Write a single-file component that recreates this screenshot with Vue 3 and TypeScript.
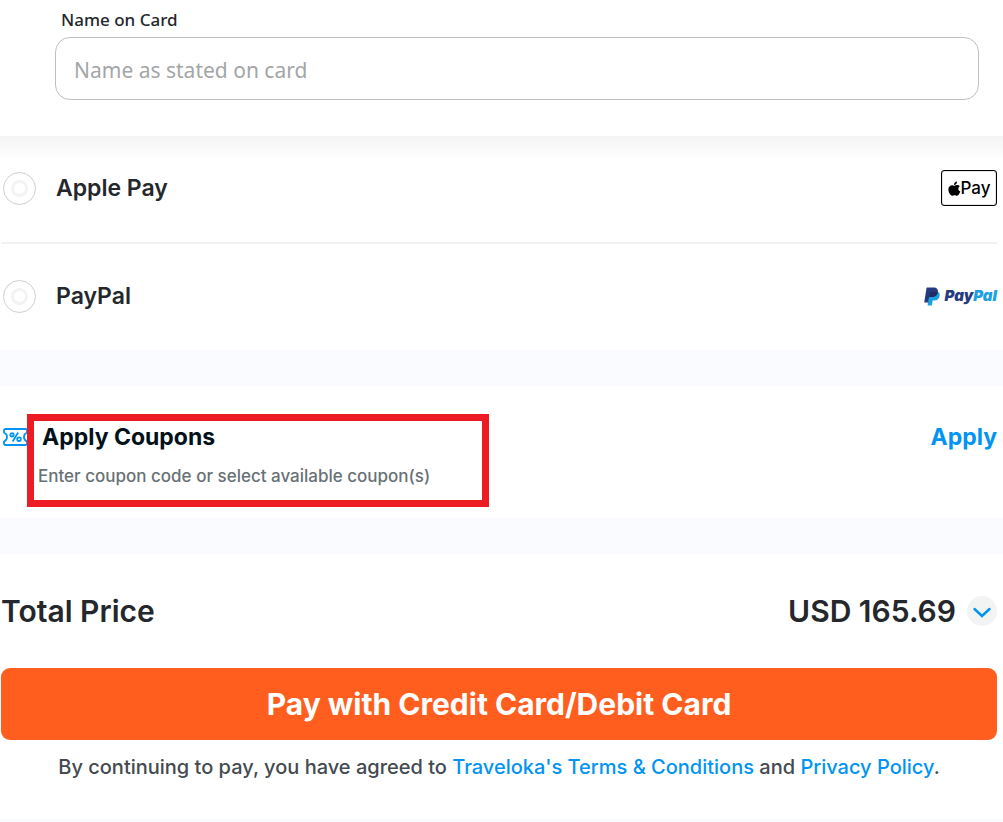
<script setup lang="ts">
import { ref } from 'vue'

const cardName = ref('')
const method = ref('')
</script>

<template>
  <main class="checkout">
    <section class="card-form">
      <label class="field-label" for="card-name">Name on Card</label>
      <input id="card-name" v-model="cardName" class="field" type="text" placeholder="Name as stated on card" />
    </section>

    <section class="methods">
      <div class="method">
        <input id="apple-pay" v-model="method" class="radio" type="radio" name="method" value="apple" />
        <label class="method-name" for="apple-pay">Apple Pay</label>
        <span class="apple-badge">
          <svg class="apple-mark" viewBox="0 0 24 28" aria-hidden="true">
            <path d="M16.600 1c.2 2-.5 3.500-1.500 4.700-1 1.200-2.500 2-4 1.900-.2-1.800.6-3.500 1.600-4.600C13.700 1.900 15.300 1.100 16.600 1zM21.900 9.900c-1.700 1.100-2.700 2.600-2.700 4.600 0 2.400 1.400 4.300 3.600 5.200-.5 1.600-1.300 3.100-2.200 4.500-1.100 1.700-2.200 3.300-4.200 3.300-1.800 0-2.300-1.100-4.400-1.100s-2.700 1.100-4.400 1.100c-2 0-3.300-1.700-4.500-3.500C.9 20.900-.5 15.300 1.700 11.400 2.900 9.100 5 7.700 7.300 7.700c1.900 0 3.200 1.200 4.800 1.200 1.500 0 2.600-1.300 5-1.300 1.900 0 3.700.9 4.800 2.300z" />
          </svg>
          <span>Pay</span>
        </span>
      </div>
      <div class="method">
        <input id="paypal" v-model="method" class="radio" type="radio" name="method" value="paypal" />
        <label class="method-name" for="paypal">PayPal</label>
        <span class="paypal-badge">
          <svg class="paypal-mark" viewBox="0 0 16 19" aria-hidden="true">
            <path fill="#1ba0e2" d="M5.500 4.500h7.700c2 .6 2.800 2.200 2.400 4.400-.6 3-2.600 4.500-5.600 4.500H8.700L7.800 18.500H3.600z" />
            <path fill="#253b80" d="M2.600.4h6.900c3.200 0 4.900 1.700 4.300 4.700-.6 3.300-2.900 5-6.200 5H5.200L4.200 15.600H.2z" />
            <path fill="#222d65" d="M6 4.700h7.800c-.3 3.500-2.800 5.400-6.200 5.400H5.200z" />
          </svg>
          <span class="paypal-word">Pay<span class="paypal-light">Pal</span></span>
        </span>
      </div>
    </section>

    <section class="coupons">
      <svg class="coupon-icon" viewBox="0 0 25 18" aria-hidden="true">
        <path d="M2.500 1h20q1.500 0 1.500 1.500v2q-3 1.300-3 4.500t3 4.500v2q0 1.500-1.500 1.500h-20Q1 17 1 15.500v-2q3-1.300 3-4.500T1 4.500v-2Q1 1 2.500 1z" />
        <path d="M15.200 4.500 9.600 13.500" />
        <circle cx="9" cy="6.800" r="1.700" />
        <circle cx="16" cy="11.200" r="1.800" />
      </svg>
      <div class="coupon-copy">
        <h2 class="coupon-title">Apply Coupons</h2>
        <p class="coupon-hint">Enter coupon code or select available coupon(s)</p>
      </div>
      <button class="apply" type="button">Apply</button>
      <span class="highlight" aria-hidden="true"></span>
    </section>

    <section class="summary">
      <div class="total">
        <h2 class="total-label">Total Price</h2>
        <span class="total-value">USD 165.69</span>
        <button class="toggle" type="button" aria-label="Show price details">
          <svg viewBox="0 0 30 30" aria-hidden="true"><path d="M7.500 13 15 20 22.500 13" /></svg>
        </button>
      </div>
      <button class="pay" type="button">Pay with Credit Card/Debit Card</button>
      <p class="terms">
        By continuing to pay, you have agreed to <a href="#terms">Traveloka's Terms &amp; Conditions</a> and
        <a href="#privacy">Privacy Policy</a>.
      </p>
    </section>
  </main>
</template>

<style>
body {
  margin: 0;
  background: #fff;
}
</style>

<style scoped>
.checkout {
  font-family: Inter, "Liberation Sans", sans-serif;
  color: #24272b;
}

.checkout * {
  box-sizing: border-box;
}

h2,
p {
  margin: 0;
}

button {
  padding: 0;
  border: 0;
  font-family: inherit;
  cursor: pointer;
}

.card-form {
  display: flex;
  flex-direction: column;
  gap: 5px;
  padding: 8px 24px 36px 55px;
  font-family: "Noto Sans", "Open Sans", sans-serif;
}

.field-label {
  padding-left: 6px;
  font-size: 17px;
  line-height: 24px;
  font-weight: 500;
}

.field {
  width: 100%;
  height: 63px;
  padding: 2px 18px 0;
  border: 1px solid #bfbfbf;
  border-radius: 15px;
  outline: 0;
  background: #fff;
  font-family: inherit;
  font-size: 21px;
  color: #24272b;
}

.field::placeholder {
  color: #a3a6a7;
  opacity: 1;
}

.methods {
  padding: 0 6px 0 1px;
  background: linear-gradient(#f4f4f4, #fff 24px);
}

.method {
  display: flex;
  align-items: center;
  height: 106px;
  padding: 0 0 2px 2px;
}

.method + .method {
  height: 108px;
  border-top: 2px solid #f0f1f1;
}

.radio {
  appearance: none;
  width: 33px;
  height: 33px;
  margin: 0 20px 0 0;
  border: 1px solid #cfcfcf;
  border-radius: 50%;
  background: radial-gradient(circle, #fff 5px, #f3f3f3 6px, #f3f3f3 8px, #fff 9px);
}

.radio:checked {
  background: radial-gradient(circle, #0194f3 8px, #fff 9px);
}

.method-name {
  flex: 1;
  font-size: 23px;
  line-height: 32px;
  font-weight: 600;
}

.apple-badge {
  display: flex;
  align-items: center;
  justify-content: center;
  width: 56px;
  height: 36px;
  border: 1px solid #000;
  border-radius: 3px;
  box-shadow: inset 0 0 1px #000;
  font-size: 17px;
  line-height: 24px;
  font-weight: 500;
  color: #000;
}

.apple-mark {
  width: 13px;
  height: 15px;
}

.paypal-badge {
  display: flex;
  align-items: center;
  gap: 5px;
}

.paypal-mark {
  width: 16px;
  height: 19px;
}

.paypal-word {
  font-size: 15px;
  line-height: 20px;
  font-weight: 900;
  font-style: italic;
  color: #253b80;
}

.paypal-light {
  color: #1ba0e2;
}

.coupons {
  position: relative;
  display: flex;
  align-items: flex-start;
  gap: 10px;
  border: solid #fafbff;
  border-width: 36px 0;
  padding: 34px 6px 27px 3px;
}

.coupon-icon {
  flex: none;
  width: 25px;
  height: 18px;
  margin-top: 8px;
  fill: none;
  stroke: #0194f3;
  stroke-width: 1.8;
}

.coupon-copy {
  flex: 1;
}

.coupon-title {
  padding-left: 4px;
  font-size: 23px;
  line-height: 34px;
  font-weight: 700;
  color: #03121a;
}

.coupon-hint {
  padding-top: 7px;
  font-size: 17px;
  line-height: 30px;
  font-weight: 500;
  color: #687176;
}

.apply {
  background: none;
  font-size: 23px;
  line-height: 34px;
  font-weight: 700;
  color: #0194f3;
}

.highlight {
  position: absolute;
  top: 28px;
  left: 27px;
  width: 462px;
  height: 93px;
  border: 7px solid #ed1c24;
  pointer-events: none;
}

.summary {
  padding: 36px 6px 37px 1px;
  border-bottom: 4px solid #fafbff;
}

.total {
  display: flex;
  align-items: center;
  padding-bottom: 36px;
}

.total-label {
  flex: 1;
  font-size: 30px;
  line-height: 42px;
  font-weight: 600;
}

.total-value {
  font-size: 30px;
  line-height: 42px;
  font-weight: 600;
}

.toggle {
  width: 30px;
  height: 30px;
  margin-left: 11px;
  border-radius: 50%;
  background: #f2f3f3;
}

.toggle svg {
  display: block;
  fill: none;
  stroke: #0194f3;
  stroke-width: 2.4;
  stroke-linecap: round;
}

.pay {
  display: block;
  width: 100%;
  height: 72px;
  border-radius: 9px;
  background: #ff5e1f;
  font-size: 30px;
  font-weight: 700;
  color: #fff;
}

.terms {
  padding-top: 12px;
  font-size: 20px;
  line-height: 30px;
  font-weight: 500;
  text-align: center;
  color: #434a50;
}

.terms a {
  color: #0194f3;
  text-decoration: none;
}
</style>
